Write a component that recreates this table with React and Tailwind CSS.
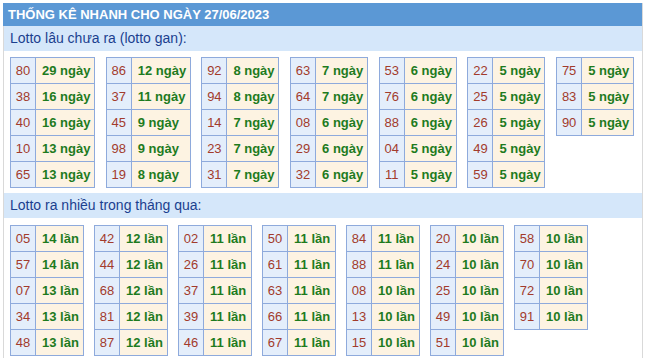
const gan = [
  [["80", "29"], ["38", "16"], ["40", "16"], ["10", "13"], ["65", "13"]],
  [["86", "12"], ["37", "11"], ["45", "9"], ["98", "9"], ["19", "8"]],
  [["92", "8"], ["94", "8"], ["14", "7"], ["23", "7"], ["31", "7"]],
  [["63", "7"], ["64", "7"], ["08", "6"], ["29", "6"], ["32", "6"]],
  [["53", "6"], ["76", "6"], ["88", "6"], ["04", "5"], ["11", "5"]],
  [["22", "5"], ["25", "5"], ["26", "5"], ["49", "5"], ["59", "5"]],
  [["75", "5"], ["83", "5"], ["90", "5"]],
];

const nhieu = [
  [["05", "14"], ["57", "14"], ["07", "13"], ["34", "13"], ["48", "13"]],
  [["42", "12"], ["44", "12"], ["68", "12"], ["81", "12"], ["87", "12"]],
  [["02", "11"], ["26", "11"], ["37", "11"], ["39", "11"], ["46", "11"]],
  [["50", "11"], ["61", "11"], ["63", "11"], ["66", "11"], ["67", "11"]],
  [["84", "11"], ["88", "11"], ["08", "10"], ["13", "10"], ["15", "10"]],
  [["20", "10"], ["24", "10"], ["25", "10"], ["49", "10"], ["51", "10"]],
  [["58", "10"], ["70", "10"], ["72", "10"], ["91", "10"]],
];

// bảng nhỏ: cột số + cột giá trị
function StatTable({ rows, unit, valW }) {
  return (
    <div className="flex flex-col self-start border-t border-l border-[#8eaadc]">
      {rows.map(([num, val], i) => (
        <div key={i} className="flex h-[26px]">
          <div className="w-[25px] border-r border-b border-[#8eaadc] bg-[#e4eefb] text-center text-[13px] leading-[25px] text-[#a23b2c]">
            {num}
          </div>
          <div
            className={
              "border-r border-b border-[#8eaadc] bg-[#fdf3e2] pl-[6px] text-[13px] leading-[25px] font-bold text-[#1e7b1e] whitespace-nowrap " +
              valW
            }
          >
            {val} {unit}
          </div>
        </div>
      ))}
    </div>
  );
}

export default function App() {
  return (
    <div className="w-[649px] h-[358px] bg-white pt-[3px] pl-[3px] font-['Liberation_Sans',Arial,sans-serif]">
      <div className="w-[640px] h-[355px] border-l border-r border-[#d9d9d9]">
        {/* Tiêu đề */}
        <div className="h-[23px] bg-[#5b98d5] text-white font-bold text-[13px] leading-[23px] pl-[5px] -ml-px">
          THỐNG KÊ NHANH CHO NGÀY 27/06/2023
        </div>

        {/* Lotto gan */}
        <div className="h-[25px] bg-[#d5e7fa] text-[#1b3f8f] text-[14px] leading-[25px] pl-[6px]">
          Lotto lâu chưa ra (lotto gan):
        </div>
        <div className="flex gap-[10.7px] pl-[6px] pt-[6px] h-[142px]">
          {gan.map((t, i) => (
            <StatTable
              key={i}
              rows={t}
              unit="ngày"
              valW={i < 2 ? "w-[59px]" : "w-[52px]"}
            />
          ))}
        </div>

        {/* Lotto ra nhiều */}
        <div className="h-[25px] bg-[#d5e7fa] text-[#1b3f8f] text-[14px] leading-[25px] pl-[6px]">
          Lotto ra nhiều trong tháng qua:
        </div>
        <div className="flex gap-[10px] pl-[6px] pt-[7px]">
          {nhieu.map((t, i) => (
            <StatTable key={i} rows={t} unit="lần" valW="w-[48px]" />
          ))}
        </div>
      </div>
    </div>
  );
}
